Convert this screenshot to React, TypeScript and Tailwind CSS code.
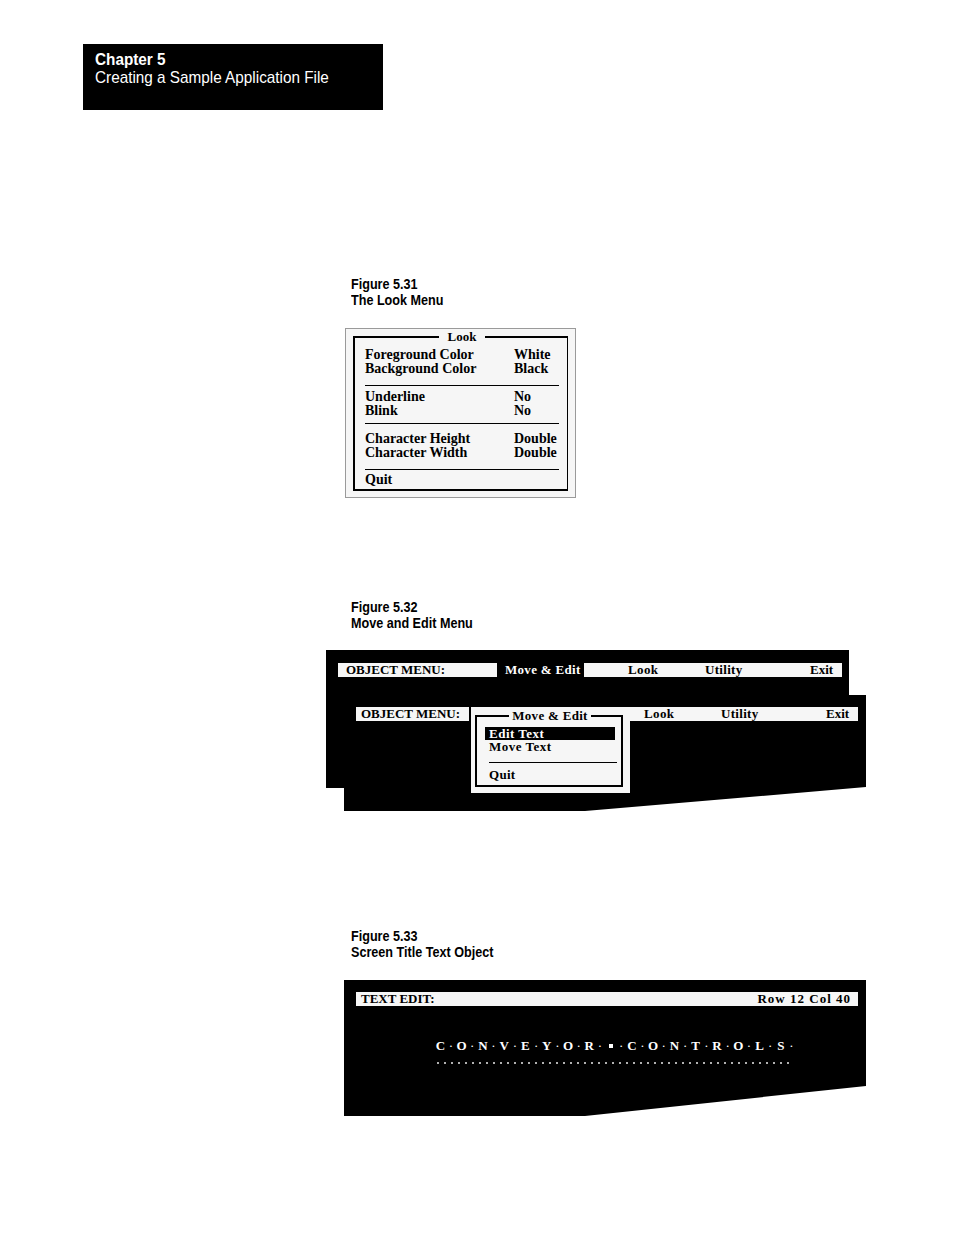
const sans = "font-['Liberation_Sans',Arial,sans-serif]";
const serif = "font-['Liberation_Serif','Times_New_Roman',serif]";

const LOOK_GROUPS: [string, string][][] = [
  [["Foreground Color", "White"], ["Background Color", "Black"]],
  [["Underline", "No"], ["Blink", "No"]],
  [["Character Height", "Double"], ["Character Width", "Double"]],
];

// the document uses a condensed grotesque; Liberation Sans squeezed to match
function Caption({ num, title }: { num: string; title: string }) {
  return (
    <div className={`${sans} ml-[351px] text-[14px] leading-[16px] font-bold text-black origin-left scale-x-[0.9]`}>
      <div>Figure {num}</div>
      <div>{title}</div>
    </div>
  );
}

function LookMenu() {
  const gaps = ["mt-[9px]", "mt-[5px]", "mt-[9px]"];
  const after = ["mt-[4px]", "mt-[8px]", "mt-[3px]"];
  return (
    <div className="ml-[345px] mt-[20px] w-[231px] h-[170px] border border-[#9a9a9a] bg-[#f6f6f6] pt-[1px] px-[7px]">
      <fieldset className={`${serif} border-2 border-r border-black pl-[10px] pr-[8px] pt-[4px] pb-[2px] text-[14px] leading-[14px] font-bold text-black`}>
        <legend className="mx-auto px-[9px] text-[13px] leading-[14px]">Look</legend>
        {LOOK_GROUPS.map((g, i) => (
          <div key={i}>
            <div className={i === 0 ? "" : after[i - 1]}>
              {g.map(([k, v]) => (
                <div key={k} className="grid grid-cols-[149px_1fr] h-[14px]">
                  <span>{k}</span>
                  <span>{v}</span>
                </div>
              ))}
            </div>
            <div className={`${gaps[i]} border-t border-black`} />
          </div>
        ))}
        <div className={`${after[2]} h-[14px]`}>Quit</div>
      </fieldset>
    </div>
  );
}

function MoveEditMenu() {
  return (
    <div className={`${serif} relative ml-[326px] mt-[19px] w-[540px] h-[161px] text-[13px] leading-[14px] font-bold text-black`}>
      {/* screen behind */}
      <div className="w-[523px] h-[138px] bg-black pt-[13px] pl-[12px] pr-[7px]">
        <div className="flex h-[14px] bg-[#f6f6f6]">
          <div className="w-[159px] pl-[8px]">OBJECT MENU:</div>
          <div className="w-[87px] bg-black text-white pl-[8px] tracking-[0.3px]">Move &amp; Edit</div>
          <div className="flex-1 flex pl-[44px]">
            <span className="w-[77px] tracking-[0.4px]">Look</span>
            <span className="w-[105px] tracking-[0.3px]">Utility</span>
            <span>Exit</span>
          </div>
        </div>
      </div>
      {/* screen in front, with the dropdown open */}
      <div className="absolute left-[18px] top-[45px] w-[522px] h-[116px] bg-black pt-[12px] pl-[12px] pr-[8px] [clip-path:polygon(0_0,100%_0,100%_92px,241px_100%,0_100%)]">
        <div className="flex items-start">
          <div className="w-[115px] pr-[2px]">
            <div className="h-[14px] bg-[#f6f6f6] pl-[5px]">OBJECT MENU:</div>
          </div>
          <div className="w-[159px] h-[86px] bg-[#f6f6f6] pt-[2px] pl-[4px] pr-[7px]">
            <fieldset className="border-2 border-black pl-[8px] pr-[6px] pt-[4px] pb-[3px]">
              <legend className="mx-auto px-[3px] leading-[14px] tracking-[0.3px]">Move &amp; Edit</legend>
              <div className="h-[13px] leading-[13px] bg-black text-white pl-[4px] tracking-[0.5px]">Edit Text</div>
              <div className="h-[14px] pl-[4px] tracking-[0.5px]">Move Text</div>
              <div className="mt-[8px] ml-[4px] -mr-[2px] border-t border-black" />
              <div className="mt-[5px] h-[14px] pl-[4px] tracking-[0.3px]">Quit</div>
            </fieldset>
          </div>
          <div className="flex-1 flex h-[14px] bg-[#f6f6f6] pl-[14px]">
            <span className="w-[77px] tracking-[0.4px]">Look</span>
            <span className="w-[105px] tracking-[0.3px]">Utility</span>
            <span>Exit</span>
          </div>
        </div>
      </div>
    </div>
  );
}

function TextEditScreen() {
  const title = "CONVEYOR CONTROLS".split("");
  return (
    <div className={`${serif} ml-[344px] mt-[20px] w-[522px] h-[136px] bg-black pt-[12px] pl-[12px] pr-[8px] font-bold text-[13px] leading-[14px] [clip-path:polygon(0_0,100%_0,100%_106px,241px_100%,0_100%)]`}>
      <div className="flex justify-between h-[14px] bg-[#f6f6f6] pl-[5px] pr-[7px] text-black">
        <span>TEXT EDIT:</span>
        <span className="tracking-[1px]">Row 12 Col 40</span>
      </div>
      <div className="mt-[33px] ml-[79px] flex text-white">
        {title.map((c, i) => (
          <div key={i} className="flex">
            <span className="w-[10.65px] flex justify-center items-center h-[14px]">
              {c === " " ? <span className="block w-[4px] h-[4px] bg-white" /> : c}
            </span>
            <span className="w-[10.65px] text-center font-normal">·</span>
          </div>
        ))}
      </div>
      <div className="mt-[9px] ml-[81px] flex gap-[5px]">
        {Array.from({ length: 51 }).map((_, i) => (
          <span key={i} className="block w-[2px] h-[2px] bg-[#b0b0b0]" />
        ))}
      </div>
    </div>
  );
}

export default function App() {
  return (
    <div className="w-[954px] h-[1235px] bg-white pt-[44px] overflow-hidden">
      <div className={`${sans} ml-[83px] w-[300px] h-[66px] bg-black text-white pl-[12px] pt-[7px] text-[17px] leading-[18px]`}>
        <div className="origin-left scale-x-[0.9]">
          <div className="font-bold">Chapter 5</div>
          <div>Creating a Sample Application File</div>
        </div>
      </div>

      <div className="mt-[166px]">
        <Caption num="5.31" title="The Look Menu" />
      </div>
      <LookMenu />

      <div className="mt-[101px]">
        <Caption num="5.32" title="Move and Edit Menu" />
      </div>
      <MoveEditMenu />

      <div className="mt-[117px]">
        <Caption num="5.33" title="Screen Title Text Object" />
      </div>
      <TextEditScreen />
    </div>
  );
}
